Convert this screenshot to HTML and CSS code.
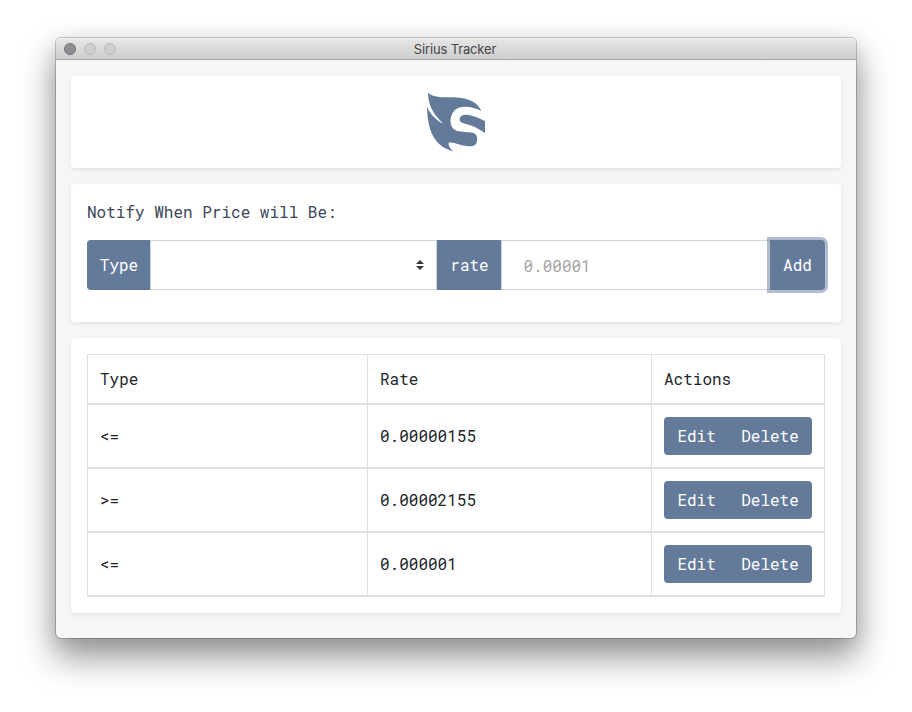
FILE: index.html
```html
<!DOCTYPE html>
<html lang="en">
<head>
<meta charset="utf-8">
<title>Sirius Tracker</title>
<link rel="stylesheet" href="styles.css">
</head>
<body>
<div class="window">
  <header class="titlebar">
    <div class="lights"><span class="light light-close"></span><span class="light"></span><span class="light"></span></div>
    <span class="title">Sirius Tracker</span>
  </header>
  <main class="content">
    <section class="card brand">
      <svg class="logo" viewBox="0 0 240 240" aria-label="Sirius">
        <path d="M36 32C50 44 70 46 98 46C142 46 180 52 196 87C172 74 136 68 117 84C99 100 99 134 117 144C131 151 150 149 168 152C180 154 185 161 183 175C183 188 174 194 158 193C133 192 116 179 98 182C96 192 105 202 112 208C63 194 35 160 33 74C42 94 58 113 81 125C60 101 37 80 36 32Z"/>
        <path d="M207 117L207 153C188 139 169 130 147 125C134 122 130 118 131 111C133 97 149 96 168 101C181 104 194 110 207 117Z"/>
      </svg>
    </section>
    <section class="card notify">
      <label class="notify-label" for="rate">Notify When Price will Be:</label>
      <div class="input-group">
        <span class="addon addon-type">Type</span>
        <div class="select" role="combobox" aria-label="Type">
          <svg class="caret" viewBox="0 0 8 10"><path d="M4 0L8 4H0ZM0 6H8L4 10Z"/></svg>
        </div>
        <span class="addon addon-rate">rate</span>
        <input class="rate" id="rate" placeholder="0.00001">
        <button class="add">Add</button>
      </div>
    </section>
    <section class="card list">
      <table class="rates">
        <thead><tr><th class="col-type">Type</th><th class="col-rate">Rate</th><th>Actions</th></tr></thead>
        <tbody>
          <tr><td>&lt;=</td><td>0.00000155</td><td><div class="actions"><button>Edit</button><button>Delete</button></div></td></tr>
          <tr><td>&gt;=</td><td>0.00002155</td><td><div class="actions"><button>Edit</button><button>Delete</button></div></td></tr>
          <tr><td>&lt;=</td><td>0.000001</td><td><div class="actions"><button>Edit</button><button>Delete</button></div></td></tr>
        </tbody>
      </table>
    </section>
  </main>
</div>
</body>
</html>
```
FILE: styles.css
```css
* { box-sizing: border-box; }
body {
  margin: 0;
  height: 712px;
  padding: 38px 56px;
  overflow: hidden;
  background: #fff;
  color: #212529;
  font: 400 16px/24px "Roboto Mono", "DejaVu Sans Mono", monospace;
}
.window {
  height: 600px;
  border-radius: 5px;
  background: #f6f6f6;
  box-shadow: 0 0 0 1px rgba(0, 0, 0, .2), 0 18px 34px 2px rgba(0, 0, 0, .4), 0 4px 20px rgba(0, 0, 0, .1);
}
.titlebar {
  position: relative;
  display: flex;
  align-items: center;
  justify-content: center;
  height: 22px;
  border-radius: 5px 5px 0 0;
  border-bottom: 1px solid #a5a5a5;
  background: linear-gradient(#e7e7e7, #cecece);
  box-shadow: inset 0 1px #f5f5f5;
}
.lights { position: absolute; left: 8px; top: 5px; display: flex; gap: 8px; }
.light { width: 12px; height: 12px; border: 1px solid #b8b8b8; border-radius: 50%; background: #cfcfcf; }
.light-close { border-color: #707074; background: #8e8e93; }
.title { padding: 1px 2px 0 0; font: 13px/22px Inter, Roboto, sans-serif; letter-spacing: -.15px; color: #444; }
.content { display: flex; flex-direction: column; gap: 16px; padding: 16px 15px; }
.card { padding: 16px; border-radius: 4px; background: #fff; box-shadow: 0 2px 4px rgba(0, 0, 0, .075); }
.brand { display: flex; justify-content: center; height: 92px; padding: 6px 0; }
.logo { width: 80px; height: 80px; fill: #647a9b; }
.notify { height: 138px; }
.notify-label { display: block; margin-bottom: 16px; color: #3d4658; }
.input-group { display: flex; height: 50px; }
.addon, .add { display: flex; align-items: center; justify-content: center; background: #647a9b; color: #fff; }
.addon-type { width: 63px; padding-left: 1px; border-radius: 4px 0 0 4px; }
.select {
  display: flex;
  align-items: center;
  justify-content: flex-end;
  width: 287px;
  padding-right: 12px;
  border: 1px solid #cbd4dc;
}
.caret { width: 8px; height: 10px; fill: #343a40; }
.addon-rate { width: 64px; padding-left: 1px; }
.rate {
  width: 269px;
  padding: 2px 22px 0 21.5px;
  border: 1px solid #cbd4dc;
  border-right: 0;
  outline: 0;
  background: #fff;
  font: inherit;
}
.rate::placeholder { color: #a5a5a5; opacity: 1; }
.add, .actions button { border: 0; font: inherit; color: #fff; }
.add { width: 55px; padding: 0; border-radius: 0 4px 4px 0; box-shadow: 0 0 0 3px rgba(100, 122, 155, .5); z-index: 1; }
.rates { width: 738px; border-collapse: separate; border-spacing: 0; table-layout: fixed; border-left: 1px solid #dbe1e5; }
.rates th, .rates td {
  height: 64px;
  padding: 0 12px;
  border-right: 1px solid #dbe1e5;
  border-bottom: 2px solid #dbe1e5;
  text-align: left;
  vertical-align: middle;
  font-weight: 400;
}
.rates th { height: 51px; border-top: 1px solid #dbe1e5; }
.rates .col-type { width: 280px; }
.rates .col-rate { width: 284px; }
.actions { display: flex; width: 148px; height: 38px; border-radius: 4px; background: #647a9b; }
.actions button { padding: 0 12px 0 13.4px; background: none; }
```
